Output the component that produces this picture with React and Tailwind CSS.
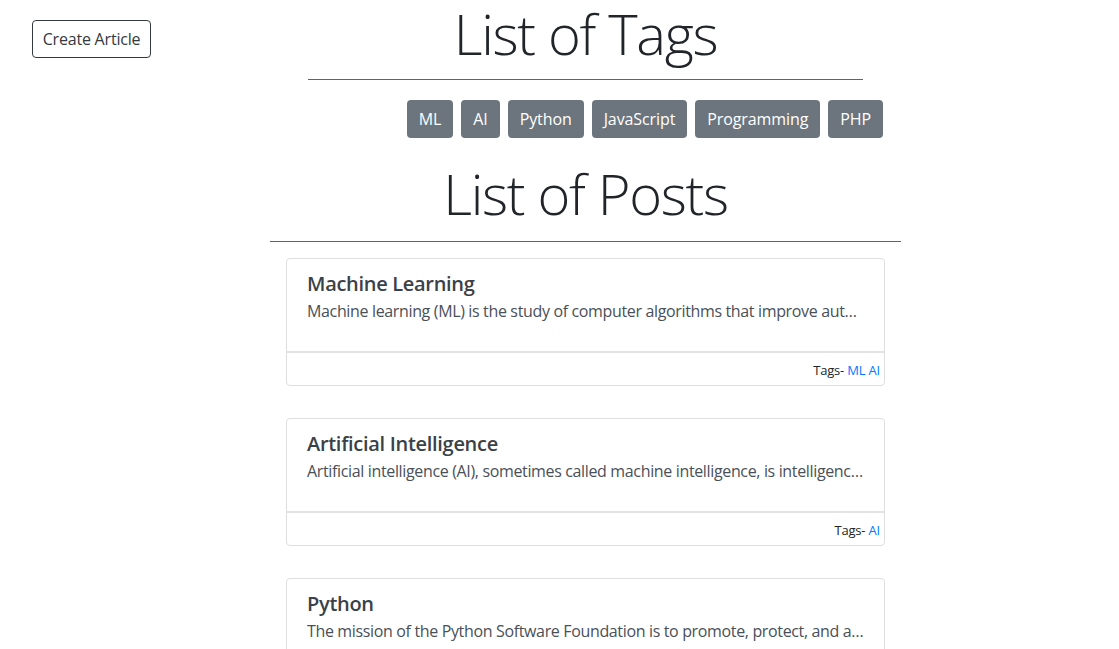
import React from "react";

const tags = ["ML", "AI", "Python", "JavaScript", "Programming", "PHP"];

const posts = [
  {
    title: "Machine Learning",
    text: "Machine learning (ML) is the study of computer algorithms that improve automatically through experience.",
    tags: ["ML", "AI"],
  },
  {
    title: "Artificial Intelligence",
    text: "Artificial intelligence (AI), sometimes called machine intelligence, is intelligence demonstrated by machines.",
    tags: ["AI"],
  },
  {
    title: "Python",
    text: "The mission of the Python Software Foundation is to promote, protect, and advance the Python programming language.",
    tags: ["Python", "Programming"],
  },
];

function Card({ post }) {
  return (
    <div className="w-[599px] rounded-[4px] border border-[#dfdfdf] bg-white">
      <div className="px-[20px] pt-[13px] pb-[28px]">
        <div className="text-[20px] leading-[24px] font-semibold tracking-[-0.3px] text-[#3b4148]">{post.title}</div>
        <div className="mt-[3px] truncate text-[16px] leading-[24px] tracking-[-0.35px] text-[#4a5058]">{post.text}</div>
      </div>
      <div className="flex h-[34px] items-center justify-end border-t-2 border-[#e2e3e5] pt-[3px] pr-[4px] text-[13px] tracking-[-0.2px] text-[#212529]">
        <span>
          Tags-{" "}
          <span className="text-[#007bff]">{post.tags.join(" ")}</span>
        </span>
      </div>
    </div>
  );
}

export default function App() {
  return (
    <div
      className="grid min-h-[649px] grid-cols-[172px_1fr_120px] bg-white text-[#212529]"
      style={{ fontFamily: '"Segoe UI", "Open Sans", "Noto Sans", sans-serif' }}
    >
      <div className="pl-[32px] pt-[20px]">
        <button className="h-[38px] w-[119px] rounded-[4px] border border-[#343a40] text-[16px] tracking-[-0.2px] text-[#343a40]">
          Create Article
        </button>
      </div>
      <div className="flex flex-col items-center">
        <h1 className="text-[56px] leading-[67px] font-light tracking-[-1.3px] text-[#212529]">List of Tags</h1>
        <div className="mt-[12px] h-px w-[555px] bg-[#9b4a52]" />
        <div className="mt-[20px] flex w-[599px] justify-end gap-[8px] pr-[2px]">
          {tags.map((t) => (
            <span
              key={t}
              className="flex h-[38px] items-center rounded-[4px] bg-[#6c757d] px-[12px] text-[16px] tracking-[-0.1px] text-white"
            >
              {t}
            </span>
          ))}
        </div>
        <h1 className="mt-[22px] text-[56px] leading-[67px] font-light tracking-[-1.3px] text-[#212529]">List of Posts</h1>
        <div className="mt-[14px] h-px w-[631px] bg-[#9b4a52]" />
        <div className="mt-[16px] flex flex-col gap-[32px] pb-[20px]">
          {posts.map((p) => (
            <Card key={p.title} post={p} />
          ))}
        </div>
      </div>
      <div />
    </div>
  );
}
